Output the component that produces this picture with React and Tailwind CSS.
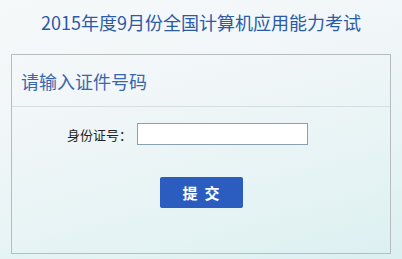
export default function App() {
  return (
    <div
      className="w-[402px] h-[259px] overflow-hidden bg-[linear-gradient(165deg,#f6f9fa_0%,#f1f6f8_35%,#e8f4f5_65%,#dcf0f1_100%)]"
      style={{ fontFamily: '"Noto Sans CJK SC", "Noto Sans", sans-serif' }}
    >
      <h1 className="h-[44px] flex items-center justify-center text-[18px] leading-none text-[#2b5aa6] font-normal">
        2015年度9月份全国计算机应用能力考试
      </h1>
      <div className="mt-[10px] ml-[11px] w-[380px] h-[200px] border border-[#b7bcbe] flex flex-col">
        <div className="h-[52px] border-b border-[#d5dfe2] flex items-center pl-[9px] text-[18px] leading-none text-[#3a66ad]">
          请输入证件号码
        </div>
        <div className="flex items-center pt-[16px] pl-[55px]">
          <span className="w-[70px] text-[13px] leading-none text-[#222]">身份证号：</span>
          <input
            type="text"
            className="w-[171px] h-[22px] border border-[#8aa0b4] bg-white outline-none"
          />
        </div>
        <div className="flex justify-center pt-[32px]">
          <button className="w-[83px] h-[31px] rounded-[2px] bg-[#2a5dbf] text-white text-[15px] font-bold leading-none flex items-center justify-center gap-[7px]">
            <span>提</span>
            <span>交</span>
          </button>
        </div>
      </div>
    </div>
  );
}
